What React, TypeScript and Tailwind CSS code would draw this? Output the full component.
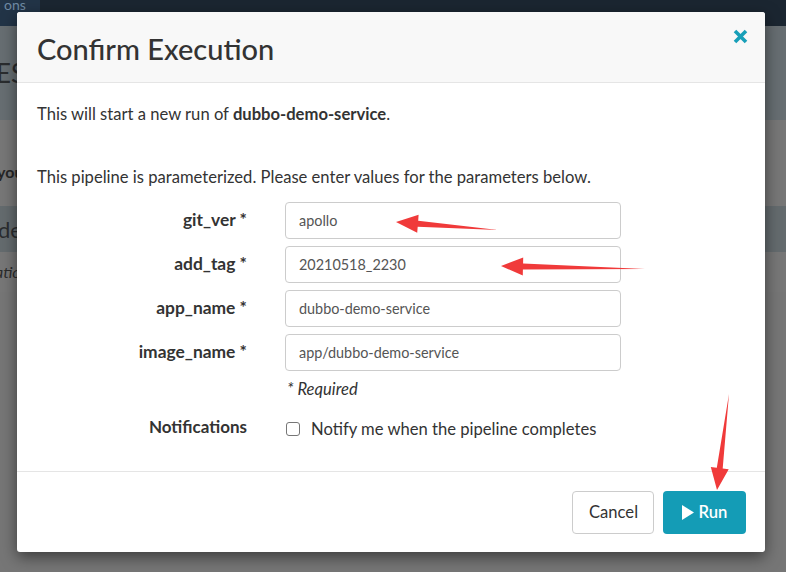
import React from 'react';

const params = [
    { name: 'git_ver', value: 'apollo' },
    { name: 'add_tag', value: '20210518_2230' },
    { name: 'app_name', value: 'dubbo-demo-service' },
    { name: 'image_name', value: 'app/dubbo-demo-service' },
];

const Arrow: React.FC<{ tail: [number, number]; head: [number, number] }> = ({ tail, head }) => {
    const [tx, ty] = tail;
    const [hx, hy] = head;
    const dx = hx - tx;
    const dy = hy - ty;
    const len = Math.hypot(dx, dy);
    const ux = dx / len;
    const uy = dy / len;
    const nx = -uy;
    const ny = ux;
    // base of arrowhead
    const bx = hx - ux * 22;
    const by = hy - uy * 22;
    const p = (x: number, y: number) => `${x.toFixed(1)},${y.toFixed(1)}`;
    const pts = [
        p(tx, ty),
        p(bx + nx * 3, by + ny * 3),
        p(bx + nx * 9, by + ny * 9),
        p(hx, hy),
        p(bx - nx * 9, by - ny * 9),
        p(bx - nx * 3, by - ny * 3),
    ].join(' ');
    return <polygon points={pts} fill="#f03a3a" />;
};

export default function App() {
    return (
        <div className="relative w-[786px] h-[572px] overflow-hidden bg-[#767676]" style={{ fontFamily: 'Lato, "Noto Sans", sans-serif' }}>
            {/* dimmed page behind */}
            <div className="flex flex-col">
                <div className="h-[26px] bg-[#1b2631] flex">
                    <div className="w-[40px] bg-[#223447] text-[#6f8aa3] text-[14px] leading-[10px] overflow-hidden whitespace-nowrap pl-[4px]">ons</div>
                </div>
                <div className="h-[94px] bg-[#676e72] flex items-center">
                    <span className="text-[26px] text-[#2a2c2e] -ml-[4px]">ES</span>
                </div>
                <div className="h-[86px] bg-[#777777] flex items-end pb-[22px]">
                    <span className="text-[16px] font-bold text-[#262626] -ml-[3px]">you</span>
                </div>
                <div className="h-[46px] bg-[#646b6e] flex items-center">
                    <span className="text-[22px] text-[#2b2d2f] -ml-[2px]">de</span>
                </div>
                <div className="h-[40px] bg-[#777777] flex items-center">
                    <span className="text-[16px] italic text-[#2b2b2b] -ml-[5px]">ation</span>
                </div>
            </div>

            {/* modal */}
            <div className="absolute left-[17px] top-[12px] w-[748px] bg-white rounded-[3px] shadow-[0_5px_15px_rgba(0,0,0,0.5)] text-[#333]">
                <div className="relative h-[71px] bg-[#f8f8f8] border-b border-[#e5e5e5] px-[20px] flex items-center rounded-t-[3px]">
                    <h2 className="text-[29px] leading-none font-medium text-[#333] mt-[2px]">Confirm Execution</h2>
                    <button className="absolute right-[17px] top-[17px] text-[#189fb8]">
                        <svg width="15" height="15" viewBox="0 0 15 15">
                            <path d="M2 2 L13 13 M13 2 L2 13" stroke="currentColor" strokeWidth="3.6" strokeLinecap="butt" />
                        </svg>
                    </button>
                </div>

                <div className="px-[20px] pt-[20px] pb-[31px] text-[16.6px]">
                    <p className="leading-[22px]">This will start a new run of <b>dubbo-demo-service</b>.</p>
                    <p className="leading-[22px] mt-[41px]">This pipeline is parameterized. Please enter values for the parameters below.</p>

                    <div className="mt-[14px] flex flex-col gap-[7px]">
                        {params.map(p => (
                            <div key={p.name} className="flex items-center">
                                <label className="w-[210px] text-right font-bold text-[17.4px]">{p.name} *</label>
                                <div className="ml-[38px] w-[336px] h-[37px] border border-[#ccc] rounded-[4px] px-[13px] flex items-center text-[14.4px] text-[#555]">
                                    {p.value}
                                </div>
                            </div>
                        ))}
                    </div>
                    <div className="ml-[250px] mt-[7px] italic leading-[22px]">* Required</div>

                    <div className="mt-[16px] flex items-start">
                        <div className="w-[210px] text-right font-bold leading-[22px] text-[17px]">Notifications</div>
                        <label className="ml-[39px] flex items-center leading-[22px] mt-[2px]">
                            <span className="w-[14px] h-[14px] border border-[#767676] rounded-[3px] bg-white" />
                            <span className="ml-[11px]">Notify me when the pipeline completes</span>
                        </label>
                    </div>
                </div>

                <div className="border-t border-[#e5e5e5] px-[19px] pt-[19px] pb-[18px] flex justify-end gap-[9px]">
                    <button className="h-[43px] px-[16px] w-[82px] border border-[#ccc] rounded-[4px] bg-white text-[16.6px] text-[#333]">Cancel</button>
                    <button className="h-[43px] w-[83px] rounded-[4px] bg-[#149cb6] text-white text-[16.6px] font-semibold flex items-center justify-center gap-[5px]">
                        <svg width="12" height="15" viewBox="0 0 12 15"><path d="M0 0 L12 7.5 L0 15 Z" fill="white" /></svg>
                        Run
                    </button>
                </div>
            </div>

            {/* annotation arrows */}
            <svg className="absolute inset-0 pointer-events-none" width="786" height="572">
                <Arrow tail={[498, 230]} head={[396, 222]} />
                <Arrow tail={[645, 269]} head={[501, 266]} />
                <Arrow tail={[729, 394]} head={[717, 490]} />
            </svg>
        </div>
    );
}
